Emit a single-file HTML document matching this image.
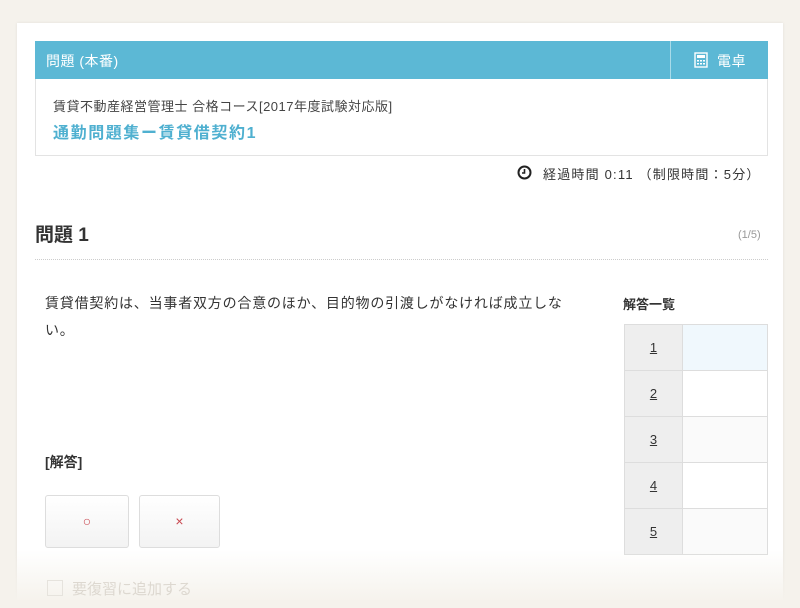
<!DOCTYPE html>
<html><head><meta charset="utf-8"><style>
*{box-sizing:border-box;margin:0;padding:0}
html,body{width:800px;height:608px;overflow:hidden}
body{background:#f5f2ec;font-family:"Liberation Sans","Noto Sans CJK JP",sans-serif;color:#333;position:relative}
.card{position:absolute;left:17px;top:23px;width:766px;height:577px;background:#fff;box-shadow:0 0 3px rgba(0,0,0,.08)}
.abs{position:absolute}
.hdr{left:35px;top:41px;width:733px;height:38px;background:#5cb8d5;color:#fff;font-size:14px;letter-spacing:.5px}
.info{left:35px;top:79px;width:733px;height:77px;border:1px solid #e3e3e3;border-top:none}
.fade{left:0;top:550px;width:800px;height:58px;background:linear-gradient(rgba(245,242,236,0),#f5f2ec 90%)}
table{border-collapse:collapse}
td{border:1px solid #ddd;height:46px;font-size:13px}
.btn{top:495px;height:53px;border:1px solid #ddd;border-radius:3px;background:linear-gradient(#fff,#f3f3f3);color:#c8474f;text-align:center;line-height:51px;font-size:14px}
</style></head><body>
<div class="card"></div>
<div class="abs hdr">
 <div class="abs" style="left:11px;top:10px">問題 (本番)</div>
 <div class="abs" style="left:635px;top:0;width:1px;height:38px;background:#a9dbe9"></div>
 <svg class="abs" style="left:659px;top:11px" width="14" height="16" viewBox="0 0 14 16"><rect x="1" y="1" width="12" height="14" fill="none" stroke="#fff" stroke-width="1.4"/><rect x="3" y="3" width="8" height="3" fill="#fff"/><g fill="#fff"><rect x="3" y="8" width="2" height="1.5"/><rect x="6" y="8" width="2" height="1.5"/><rect x="9" y="8" width="2" height="1.5"/><rect x="3" y="11" width="2" height="1.5"/><rect x="6" y="11" width="2" height="1.5"/><rect x="9" y="11" width="2" height="1.5"/></g></svg>
 <div class="abs" style="left:682px;top:10px">電卓</div>
</div>
<div class="abs info">
 <div class="abs" style="left:17px;top:17px;font-size:13px;color:#444;letter-spacing:.5px;white-space:nowrap">賃貸不動産経営管理士 合格コース[2017年度試験対応版]</div>
 <div class="abs" style="left:17px;top:40px;font-size:16px;font-weight:bold;color:#4fb0d0;letter-spacing:1.6px;white-space:nowrap">通勤問題集ー賃貸借契約1</div>
</div>
<svg class="abs" style="left:517px;top:165px" width="15" height="15" viewBox="0 0 15 15"><circle cx="7.5" cy="7.5" r="6" fill="none" stroke="#222" stroke-width="2"/><path d="M7.5 4v4H5" fill="none" stroke="#222" stroke-width="1.6"/></svg>
<div class="abs" style="left:543px;top:164px;font-size:13px;color:#333;letter-spacing:1.2px;white-space:nowrap">経過時間 0:11 （制限時間：5分）</div>
<div class="abs" style="left:35px;top:220px;font-size:19px;font-weight:bold;color:#333">問題 1</div>
<div class="abs" style="left:738px;top:229px;font-size:11px;color:#999">(1/5)</div>
<div class="abs" style="left:35px;top:259px;width:733px;border-top:1px dotted #ccc"></div>
<div class="abs" style="left:45px;top:290px;width:560px;font-size:14px;line-height:27px;color:#333;letter-spacing:.8px;white-space:nowrap">賃貸借契約は、当事者双方の合意のほか、目的物の引渡しがなければ成立しな<br>い。</div>
<div class="abs" style="left:623px;top:294px;font-size:13px;font-weight:bold">解答一覧</div>
<table class="abs" style="left:624px;top:324px;width:144px">
<tr><td style="width:58px;background:#eee;text-align:center;text-decoration:underline">1</td><td style="background:#f0f8fd"></td></tr>
<tr><td style="background:#eee;text-align:center;text-decoration:underline">2</td><td></td></tr>
<tr><td style="background:#eee;text-align:center;text-decoration:underline">3</td><td style="background:#fafafa"></td></tr>
<tr><td style="background:#eee;text-align:center;text-decoration:underline">4</td><td></td></tr>
<tr><td style="background:#eee;text-align:center;text-decoration:underline">5</td><td style="background:#fafafa"></td></tr>
</table>
<div class="abs" style="left:45px;top:452px;font-size:14px;font-weight:bold">[解答]</div>
<div class="abs btn" style="left:45px;width:84px">○</div>
<div class="abs btn" style="left:139px;width:81px">×</div>
<div class="abs fade"></div>
<div class="abs" style="left:47px;top:580px;width:16px;height:16px;border:1px solid #e6e3dd"></div>
<div class="abs" style="left:72px;top:578px;font-size:15px;color:#ddd8d0">要復習に追加する</div>
</body></html>
